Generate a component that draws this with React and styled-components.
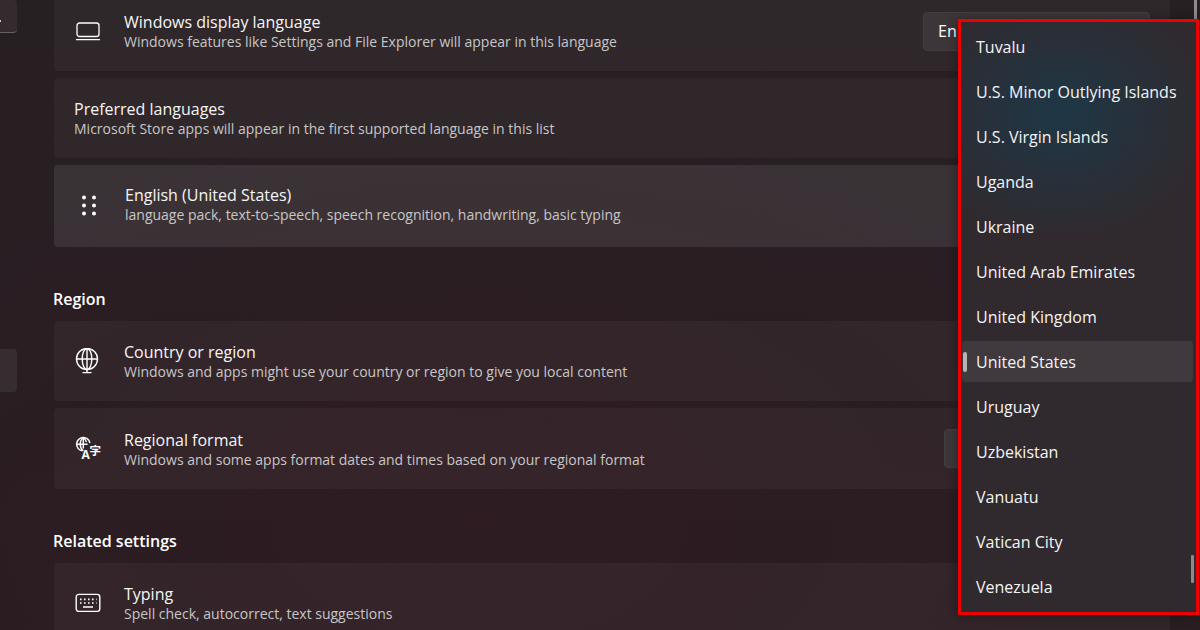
import React from 'react'
import styled, { createGlobalStyle } from 'styled-components'

const GlobalStyle = createGlobalStyle`
  html, body {
    margin: 0;
    padding: 0;
    height: 100%;
    overflow: hidden;
    background: #281d21;
  }
  * { box-sizing: border-box; }
`

const Page = styled.div`
  position: relative;
  display: flex;
  width: 1200px;
  height: 630px;
  overflow: hidden;
  font-family: "Open Sans", "Noto Sans", sans-serif;
  color: #fff;
  background: radial-gradient(700px 420px at 480px 520px, #2e1c22 0%, rgba(46, 28, 34, 0) 100%),
    linear-gradient(180deg, #272023 0%, #291d21 100%);
`

const Sidebar = styled.nav`
  width: 54px;
  flex-shrink: 0;
  display: flex;
  flex-direction: column;
  gap: 316px;
`

const NavItem = styled.div`
  position: relative;
  width: 17px;
  height: ${p => p.$h}px;
  border-radius: 0 4px 4px 0;
  background: ${p => p.$bg};
  border-bottom: ${p => (p.$edge ? '1px solid #6a6366' : 'none')};

  ${p => p.$edge && `
    &::after {
      content: '';
      position: absolute;
      left: 0;
      top: 20px;
      width: 1px;
      height: 2px;
      background: #cfcccd;
    }
  `}
`

const Main = styled.main`
  width: 1116px;
  flex-shrink: 0;
  margin-top: -9px;
  display: flex;
  flex-direction: column;
`

const Card = styled.div`
  display: flex;
  align-items: center;
  height: ${p => p.$h}px;
  margin-bottom: ${p => p.$gap ?? 7}px;
  padding-left: ${p => p.$pad ?? 20}px;
  border-radius: 4px;
  flex-shrink: 0;
  background: ${p => (p.$active ? 'rgba(255, 255, 255, 0.085)' : 'rgba(255, 255, 255, 0.04)')};
`

const IconBox = styled.div`
  width: ${p => p.$w ?? 50}px;
  flex-shrink: 0;
  display: flex;
  align-items: center;
  svg { display: block; }
`

const Texts = styled.div`
  flex: 1;
  display: flex;
  flex-direction: column;
  padding: ${p => (p.$lift ? '0 0 3px' : '2px 0 0')};
`

const Title = styled.div`
  font-size: 16px;
  line-height: 20px;
  color: #f6f5f5;
`

const Sub = styled.div`
  font-size: 14px;
  line-height: 20px;
  color: #c8c6c7;
`

const SectionTitle = styled.h2`
  margin: ${p => p.$top}px 0 11px -1px;
  font-size: 16px;
  line-height: 22px;
  font-weight: 600;
  color: #fff;
`

const SelectBtn = styled.div`
  width: ${p => p.$w}px;
  height: 39px;
  margin-right: 20px;
  padding-left: 14px;
  display: flex;
  align-items: center;
  border-radius: 4px;
  font-size: 16px;
  background: #3d3639;
  border: 1px solid #443d40;
`

const Scrollbar = styled.div`
  position: absolute;
  right: 3px;
  top: 0;
  width: 3px;
  height: 19px;
  background: #8f8b8d;
`

const Dropdown = styled.div`
  position: absolute;
  left: 958px;
  top: 19px;
  width: 241px;
  height: 596px;
  padding: 4px 3px 0 1px;
  display: flex;
  flex-direction: column;
  border: 3px solid #ec0000;
  background: radial-gradient(150px 125px at 100px 92px, #1e3746 0%, rgba(30, 55, 70, 0) 100%), #302a2f;
  box-shadow: 0 0 10px rgba(0, 0, 0, 0.35);
`

const Option = styled.div`
  position: relative;
  flex-shrink: 0;
  height: 41px;
  margin-bottom: 4px;
  padding-left: 14px;
  display: flex;
  align-items: center;
  border-radius: 4px;
  font-size: 16px;
  color: #f5f4f4;
  background: ${p => (p.$selected ? '#403a3e' : 'transparent')};

  ${p => p.$selected && `
    &::before {
      content: '';
      position: absolute;
      left: 1px;
      top: 11px;
      width: 4px;
      height: 20px;
      border-radius: 2px;
      background: #b5b3b5;
    }
  `}
`

const Thumb = styled.div`
  position: absolute;
  right: 2px;
  top: 533px;
  width: 3px;
  height: 28px;
  border-radius: 1px;
  background: #8c898c;
`

const LaptopIcon = () => (
  <svg width="28" height="20" viewBox="0 0 28 20" fill="none" stroke="#fff" strokeWidth="1.3">
    <rect x="3" y="2" width="22" height="13.5" rx="2.6" />
    <path d="M2 18.6h24" />
  </svg>
)

const GripIcon = () => (
  <svg width="16" height="22" viewBox="0 0 16 22" fill="#fff">
    <circle cx="3" cy="2.6" r="2" />
    <circle cx="13" cy="2.6" r="2" />
    <circle cx="3" cy="10.6" r="2" />
    <circle cx="13" cy="10.6" r="2" />
    <circle cx="3" cy="18.6" r="2" />
    <circle cx="13" cy="18.6" r="2" />
  </svg>
)

const GlobeIcon = () => (
  <svg width="26" height="26" viewBox="0 0 26 26" fill="none" stroke="#fff" strokeWidth="1.4">
    <circle cx="13" cy="11" r="10.5" />
    <ellipse cx="13" cy="11" rx="4.8" ry="10.5" />
    <path d="M2.5 11h21M13 .5v24M8.5 24.6h9" />
  </svg>
)

const LangIcon = () => (
  <svg width="28" height="26" viewBox="0 0 28 26" fill="none" stroke="#fff" strokeWidth="1.5">
    <g transform="translate(.6 .4)">
      <path d="M7.5 14.4A6.7 6.7 0 1 1 15.3 6.6" />
      <path d="M8.7 1.1C6.4 3 5.6 5.4 5.6 7.8s.8 4.8 3.1 6.7M8.7 1.1c1.9 1.4 2.8 3 3.1 4.7" />
      <path d="M2 7.8h11M8.7 1.1v11" />
    </g>
    <text fill="#fff" stroke="none" fontWeight="700">
      <tspan x="7.4" y="22.8" fontSize="12" fontFamily='"Open Sans", sans-serif'>A</tspan>
      <tspan x="15.6" y="18.8" fontSize="11.5" fontFamily='"Noto Sans CJK SC", sans-serif'>字</tspan>
    </text>
  </svg>
)

const KeyboardIcon = () => (
  <svg width="28" height="20" viewBox="0 0 28 20" fill="none" stroke="#fff" strokeWidth="1.4">
    <rect x="2.2" y="1.4" width="23.6" height="17" rx="2.6" />
    <path d="M6 6.4h1.6M10 6.4h1.6M14 6.4h1.6M18 6.4h1.6M22 6.4h.6M6 10h1.6M10 10h1.6M14 10h1.6M18 10h1.6M22 10h.6M9 14h10" strokeWidth="1.7" />
  </svg>
)

const countries = [
  'Tuvalu',
  'U.S. Minor Outlying Islands',
  'U.S. Virgin Islands',
  'Uganda',
  'Ukraine',
  'United Arab Emirates',
  'United Kingdom',
  'United States',
  'Uruguay',
  'Uzbekistan',
  'Vanuatu',
  'Vatican City',
  'Venezuela',
]

const App = () => (
  <Page>
    <GlobalStyle />
    <Sidebar>
      <NavItem $h={33} $bg="#332b2e" $edge />
      <NavItem $h={43} $bg="#352d30" />
    </Sidebar>
    <Main>
      <Card $h={80}>
        <IconBox><LaptopIcon /></IconBox>
        <Texts>
          <Title>Windows display language</Title>
          <Sub>Windows features like Settings and File Explorer will appear in this language</Sub>
        </Texts>
        <SelectBtn $w={227}>En</SelectBtn>
      </Card>
      <Card $h={80}>
        <Texts>
          <Title>Preferred languages</Title>
          <Sub>Microsoft Store apps will appear in the first supported language in this list</Sub>
        </Texts>
      </Card>
      <Card $h={82} $active $gap={0} $pad={27}>
        <IconBox $w={44}><GripIcon /></IconBox>
        <Texts $lift>
          <Title>English (United States)</Title>
          <Sub>language pack, text-to-speech, speech recognition, handwriting, basic typing</Sub>
        </Texts>
      </Card>
      <SectionTitle $top={41}>Region</SectionTitle>
      <Card $h={80}>
        <IconBox><GlobeIcon /></IconBox>
        <Texts>
          <Title>Country or region</Title>
          <Sub>Windows and apps might use your country or region to give you local content</Sub>
        </Texts>
      </Card>
      <Card $h={81} $gap={0}>
        <IconBox><LangIcon /></IconBox>
        <Texts>
          <Title>Regional format</Title>
          <Sub>Windows and some apps format dates and times based on your regional format</Sub>
        </Texts>
        <SelectBtn $w={206} />
      </Card>
      <SectionTitle $top={41}>Related settings</SectionTitle>
      <Card $h={80}>
        <IconBox><KeyboardIcon /></IconBox>
        <Texts>
          <Title>Typing</Title>
          <Sub>Spell check, autocorrect, text suggestions</Sub>
        </Texts>
      </Card>
    </Main>
    <Scrollbar />
    <Dropdown>
      {countries.map(name => (
        <Option key={name} $selected={name === 'United States'}>{name}</Option>
      ))}
      <Thumb />
    </Dropdown>
  </Page>
)

export default App
